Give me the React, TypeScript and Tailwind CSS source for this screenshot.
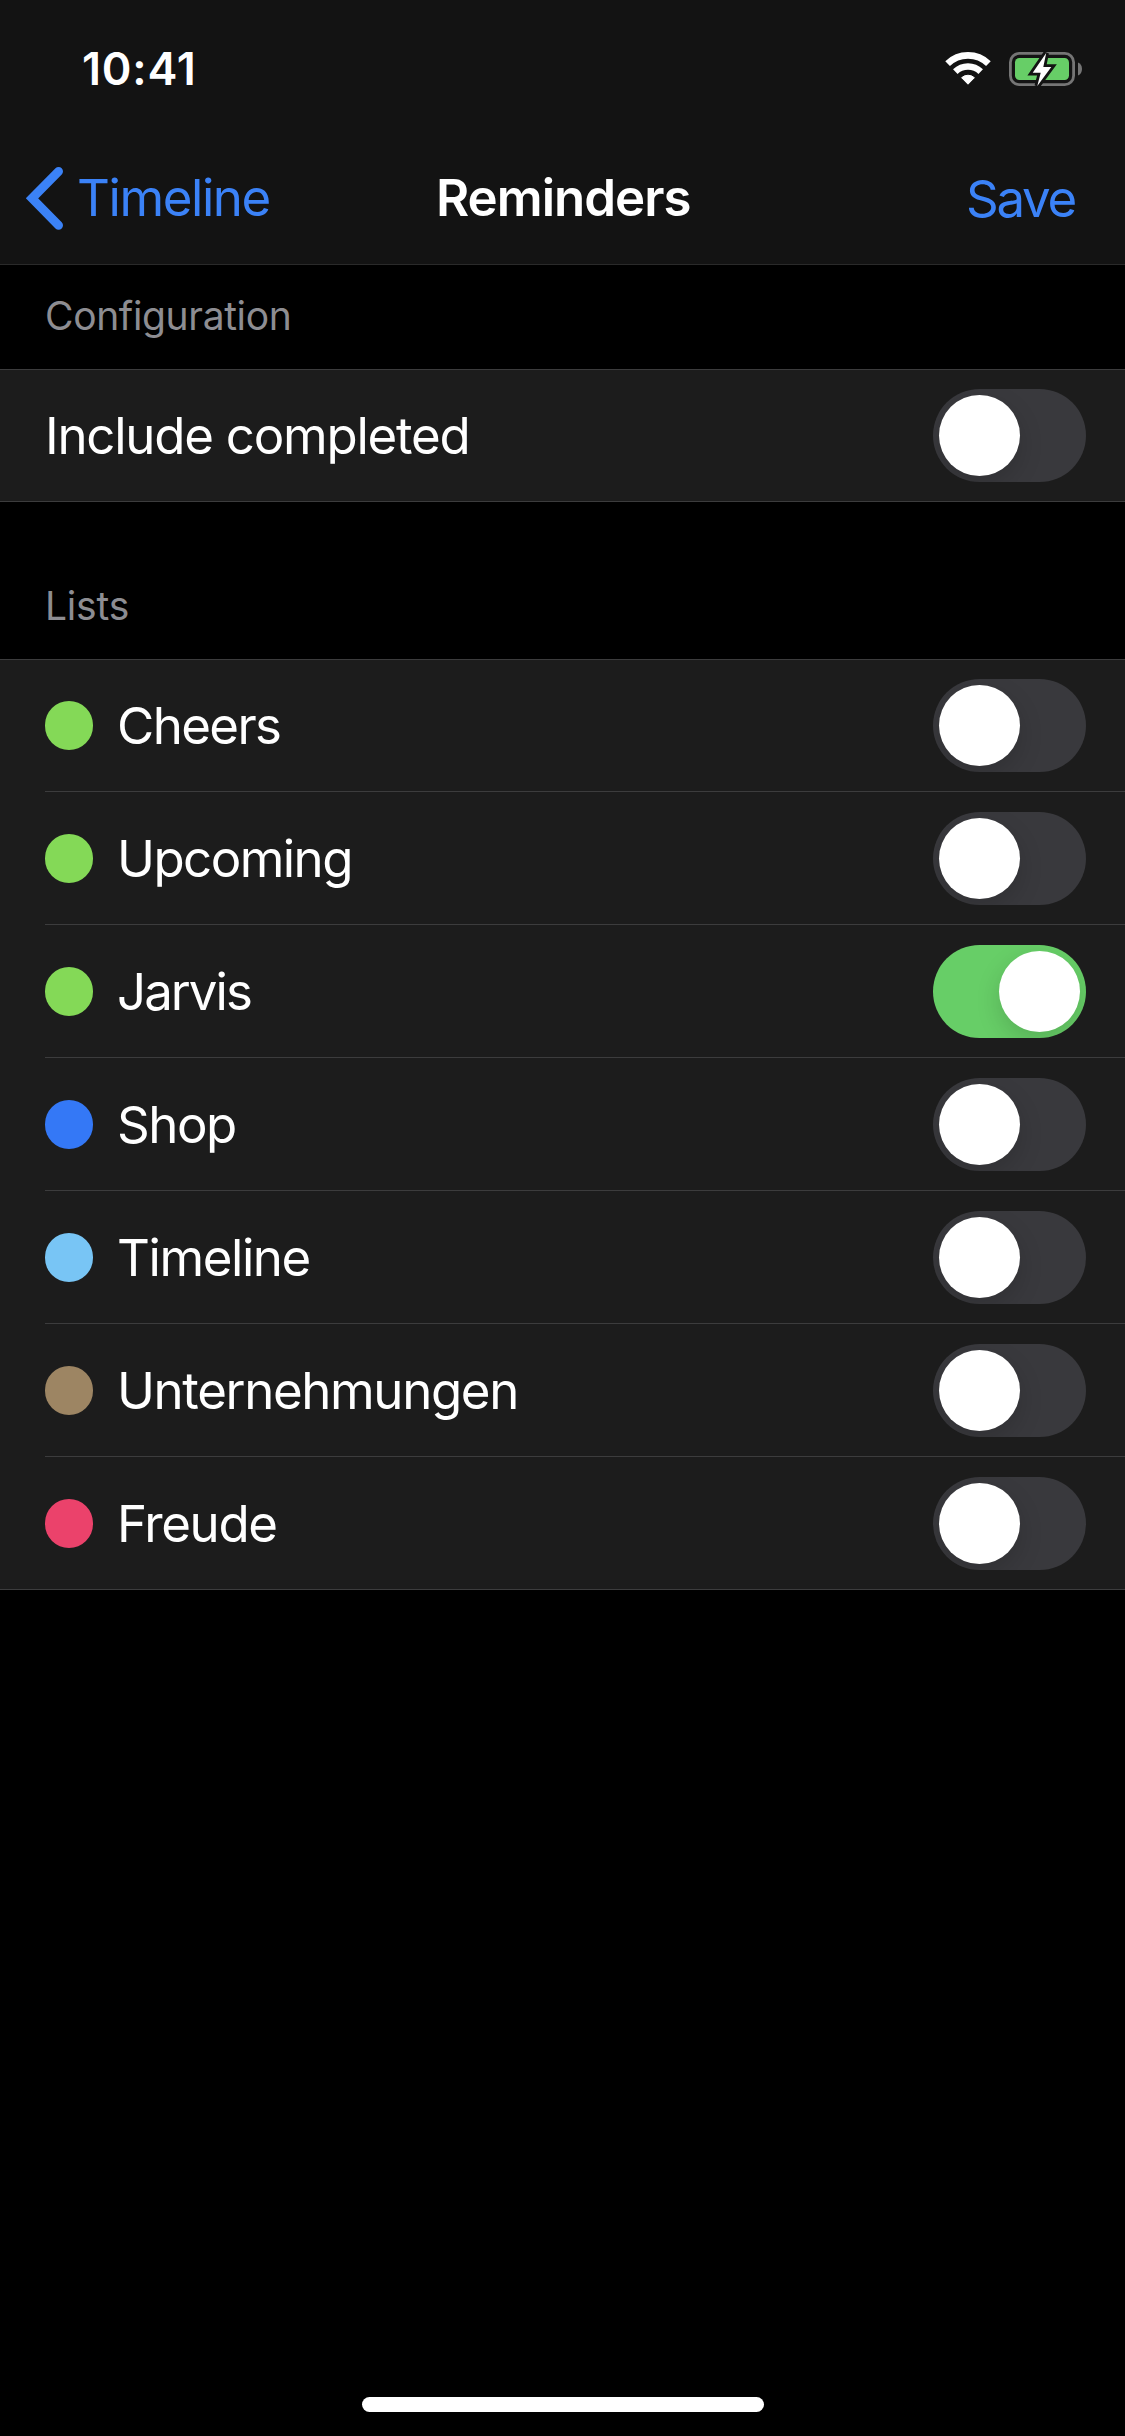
type ListItem = {
  name: string;
  dot: string;
  tracking: string;
  on?: boolean;
};

const lists: ListItem[] = [
  { name: "Cheers", dot: "bg-[#84d957]", tracking: "tracking-[-1.62px]" },
  { name: "Upcoming", dot: "bg-[#84d957]", tracking: "tracking-[-1.56px]" },
  { name: "Jarvis", dot: "bg-[#84d957]", tracking: "tracking-[-1.96px]", on: true },
  { name: "Shop", dot: "bg-[#3478f6]", tracking: "tracking-[-1.5px]" },
  { name: "Timeline", dot: "bg-[#78c5f5]", tracking: "tracking-[-1.42px]" },
  { name: "Unternehmungen", dot: "bg-[#9d8563]", tracking: "tracking-[-1.37px]" },
  { name: "Freude", dot: "bg-[#eb426b]", tracking: "tracking-[-1.36px]" },
];

function WifiIcon() {
  return (
    <svg className="h-[38px] w-12" viewBox="0 0 48 38" fill="none" stroke="#fff">
      <path d="M3.6 13.7A29.3 29.3 0 0 1 44.4 13.7" strokeWidth="6.7" />
      <path d="M11.3 21.6A18.3 18.3 0 0 1 36.7 21.6" strokeWidth="6.5" />
      <path
        d="M17.6 27.7A9.6 9.6 0 0 1 30.4 27.7L24 34.2Z"
        fill="#fff"
        strokeWidth="1"
        strokeLinejoin="round"
      />
    </svg>
  );
}

function BatteryIcon() {
  return (
    <svg className="h-[38px] w-[74px]" viewBox="0 0 74 38" fill="none">
      <rect x="1.4" y="3.4" width="63.2" height="31.2" rx="8.8" stroke="#757575" strokeWidth="2.8" />
      <rect x="6" y="8" width="54" height="22" rx="4.5" fill="#67ce67" />
      <path d="M69 12.6C71.7 13.6 73 16 73 19C73 22 71.7 24.4 69 25.4Z" fill="#757575" />
      <path
        d="M37.2 3L23.7 22.7H31.7L28.3 36L42.3 17H34.3Z"
        fill="#fff"
        stroke="#131313"
        strokeWidth="5.6"
        strokeMiterlimit="4"
        paintOrder="stroke"
      />
    </svg>
  );
}

function Toggle({ on = false, label }: { on?: boolean; label: string }) {
  return (
    <button
      type="button"
      role="switch"
      aria-checked={on}
      aria-label={label}
      className={`flex h-[93px] w-[153px] shrink-0 items-center overflow-hidden rounded-full px-1.5 ${
        on ? "justify-end bg-[#67ce67]" : "justify-start bg-[#39393d]"
      }`}
    >
      <span className="size-[81px] rounded-full bg-white shadow-[0_9px_24px_rgba(0,0,0,0.15)]" />
    </button>
  );
}

function SectionLabel({ text, className }: { text: string; className: string }) {
  return (
    <h2 className={`text-[39px] leading-[47px] font-normal text-[#8d8d92] ${className}`}>{text}</h2>
  );
}

export default function App() {
  return (
    <div className="flex h-[2436px] w-[1125px] flex-col overflow-hidden bg-black font-[Inter,sans-serif] text-white">
      <header className="h-[265px] border-b border-[#2a2a2a] bg-[#131313]">
        <div className="flex h-[132px] items-start justify-between pr-[42px] pl-[82px]">
          <time className="pt-[41px] text-[45px] leading-[55px] font-semibold tracking-[0.8px]">
            10:41
          </time>
          <div className="flex gap-[17px] pt-[50px]">
            <WifiIcon />
            <BatteryIcon />
          </div>
        </div>
        <nav className="grid h-[132px] grid-cols-[436px_1fr_159px] items-start pt-[35px] text-[51px] leading-[61px]">
          <a className="flex items-start pl-6 text-[#3b82f7]">
            <svg
              className="-mt-2 h-[78px] w-[53px] shrink-0"
              viewBox="0 0 53 78"
              fill="none"
              stroke="currentColor"
              strokeWidth="8.8"
              strokeLinecap="round"
            >
              <path d="M34.6 12.3L8 39.3L34.6 66.3" />
            </svg>
            <span className="tracking-[-1.42px]">Timeline</span>
          </a>
          <h1 className="font-semibold tracking-[-1px]">Reminders</h1>
          <a className="pt-px tracking-[-2.3px] text-[#3b82f7]">Save</a>
        </nav>
      </header>

      <SectionLabel text="Configuration" className="h-[104px] pt-[27px] pl-[45px] tracking-[-0.35px]" />
      <div className="flex h-[133px] items-center justify-between border-y border-[#3c3c3d] bg-[#1c1c1c] pr-[39px] pl-[45px]">
        <span className="text-[51px] leading-[61px] tracking-[-1.25px]">Include completed</span>
        <Toggle label="Include completed" />
      </div>

      <SectionLabel text="Lists" className="h-[157px] pt-20 pl-[45px] tracking-[-0.2px]" />
      <ul className="bg-[#1c1c1c]">
        {lists.map((item, i) => {
          const first = i === 0;
          const last = i === lists.length - 1;
          return (
            <li
              key={item.name}
              className={`h-[133px] ${first ? "border-t border-[#3c3c3d]" : "pt-px"} ${
                last ? "" : "pl-[45px]"
              }`}
            >
              <div
                className={`flex h-[132px] items-center gap-6 border-b border-[#3c3c3d] pr-[39px] ${
                  last ? "pl-[45px]" : ""
                }`}
              >
                <span className={`h-[49px] w-12 shrink-0 rounded-full ${item.dot}`} />
                <span className={`flex-1 text-[51px] leading-[61px] ${item.tracking}`}>
                  {item.name}
                </span>
                <Toggle on={item.on} label={item.name} />
              </div>
            </li>
          );
        })}
      </ul>

      <div className="mt-auto mb-[24px] ml-[362px] h-[15px] w-[402px] rounded-full bg-white" />
    </div>
  );
}
